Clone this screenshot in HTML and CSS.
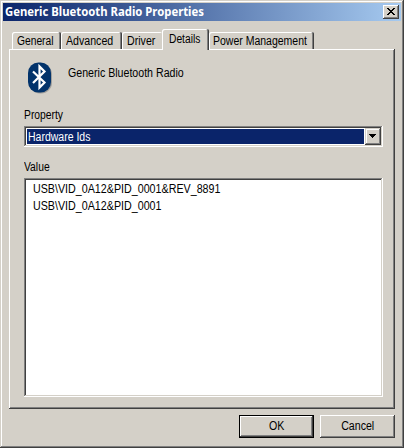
FILE: index.html
```html
<!DOCTYPE html>
<html lang="en">
<head>
<meta charset="utf-8">
<title>Generic Bluetooth Radio Properties</title>
<link rel="stylesheet" href="styles.css">
</head>
<body>
<div class="window">
  <header class="titlebar">
    <span class="title">Generic Bluetooth Radio Properties</span>
    <button class="close" aria-label="Close"><svg width="8" height="7" viewBox="0 0 8 7" shape-rendering="crispEdges"><path d="M0 0h2v1h1v1h2V1h1V0h2v1H7v1H6v1H5v1h1v1h1v1h1v1H6V6H5V5H3v1H2v1H0V6h1V5h1V4h1V3H2V2H1V1H0z"/></svg></button>
  </header>
  <nav class="tabs">
    <div class="tab general"><span class="t">General</span></div>
    <div class="tab advanced"><span class="t">Advanced</span></div>
    <div class="tab driver"><span class="t">Driver</span></div>
    <div class="tab active"><span class="t">Details</span></div>
    <div class="tab power"><span class="t">Power Management</span></div>
  </nav>
  <main class="panel">
    <div class="device">
      <svg class="bt" width="26" height="32" viewBox="0 0 26 32"><rect x="2" y="1.5" width="23" height="30" rx="11" fill="#777" opacity=".55"/><rect x="1" y=".5" width="23" height="30" rx="10.5" fill="#02336b"/><path d="M6 9.5 17.5 20.5 12.5 25.5V4.5L17.5 9.5 6 21" fill="none" stroke="#fff" stroke-width="2.2"/></svg>
      <span class="t name">Generic Bluetooth Radio</span>
    </div>
    <div class="label property"><span class="t">Property</span></div>
    <div class="combo sunken">
      <div class="selected"><span class="t">Hardware Ids</span></div>
      <div class="drop"><svg width="7" height="4" viewBox="0 0 7 4" shape-rendering="crispEdges"><path d="M0 0h7v1H6v1H5v1H4v1H3V3H2V2H1V1H0z"/></svg></div>
    </div>
    <div class="label value"><span class="t">Value</span></div>
    <div class="list sunken">
      <div class="row"><span class="t">USB\VID_0A12&amp;PID_0001&amp;REV_8891</span></div>
      <div class="row"><span class="t">USB\VID_0A12&amp;PID_0001</span></div>
    </div>
  </main>
  <footer class="actions">
    <button class="btn default"><span class="t">OK</span></button>
    <button class="btn"><span class="t">Cancel</span></button>
  </footer>
</div>
</body>
</html>
```
FILE: styles.css
```css
* { box-sizing: border-box; }
body { margin: 0; background: #d4d0c8; font: 12px/14px "Liberation Sans", Arial, sans-serif; color: #000; overflow: hidden; }
button { font: inherit; color: inherit; padding: 0; margin: 0; border: 0; background: #d4d0c8; }
svg { display: block; }
.window { width: 404px; height: 448px; padding: 2px; background: #d4d0c8;
  box-shadow: inset -1px -1px #404040, inset 1px 1px #d4d0c8, inset -2px -2px #808080, inset 2px 2px #fff; }
.t { display: inline-block; white-space: nowrap; transform: scaleX(.885); transform-origin: 0 50%; }
.titlebar { display: flex; align-items: center; justify-content: space-between; height: 18px; margin: 1px 1px 0;
  padding: 0 2px; background: linear-gradient(90deg, #0a246a, #a6caf0); }
.title { font: bold 12px/18px "Noto Sans", sans-serif; color: #fff; white-space: nowrap; transform: scaleX(.943); transform-origin: 0 50%; }
.close { display: flex; align-items: center; justify-content: center; width: 16px; height: 14px; 
  box-shadow: inset -1px -1px #404040, inset 1px 1px #fff, inset -2px -2px #808080; }
.close svg { margin: -1px 0 0 -1px; }
.tabs { display: flex; align-items: flex-end; height: 28px; padding-left: 10px; }
.tab { height: 17px; padding: 2px 0 0 5px; border-radius: 2px 2px 0 0;
  box-shadow: inset -1px 0 #404040, inset 1px 1px #fff, inset -2px 0 #808080; }
.general { width: 49px; }
.advanced { width: 61px; }
.driver { width: 40px; box-shadow: inset 1px 1px #fff; }
.active { position: relative; width: 47px; height: 21px; margin-bottom: -1px; padding: 3px 0 0 7px; background: #d4d0c8; }
.power { width: 105px; padding-left: 4px; }
.general .t, .active .t { transform: scaleX(.855); }
.power .t { transform: scaleX(.875); }
.panel { width: 386px; height: 360px; margin-left: 7px; padding: 13px 12px 0 15px;
  box-shadow: inset -1px -1px #404040, inset 1px 1px #fff, inset -2px -2px #808080; }
.device { display: flex; height: 44px; padding-left: 3px; }
.name { margin: 4px 0 0 15px; }
.label { height: 14px; }
.property { margin-top: 2px; }
.label .t { transform: scaleX(.86); }
.sunken { width: 359px; background: #fff;
  box-shadow: inset -1px -1px #fff, inset 1px 1px #808080, inset -2px -2px #d4d0c8, inset 2px 2px #404040; }
.combo { display: flex; height: 21px; margin-top: 4px; padding: 2px; }
.selected { flex: 1; margin: 1px; padding: 1px 0 0 1px; background: #0a246a; color: #fff; }
.selected .t { transform: scaleX(.875); }
.drop { display: flex; align-items: center; justify-content: center; width: 16px; background: #d4d0c8;
  box-shadow: inset -1px -1px #404040, inset 1px 1px #d4d0c8, inset -2px -2px #808080, inset 2px 2px #fff; }
.drop svg { margin: -1px 0 0 -1px; }
.value { margin-top: 13px; }
.list { height: 219px; margin-top: 4px; padding: 4px 0 0 9px; }
.row { height: 17px; line-height: 14px; }
.row .t { transform: scaleX(.892); }
.actions { display: flex; justify-content: flex-end; gap: 6px; margin-top: 6px; padding-right: 7px; }
.btn { width: 75px; height: 23px; padding-bottom: 2px; box-shadow: inset -1px -1px #404040, inset 1px 1px #fff, inset -2px -2px #808080; }
.btn .t { transform-origin: 50% 50%; }
.default { border: 1px solid #000; }
```
